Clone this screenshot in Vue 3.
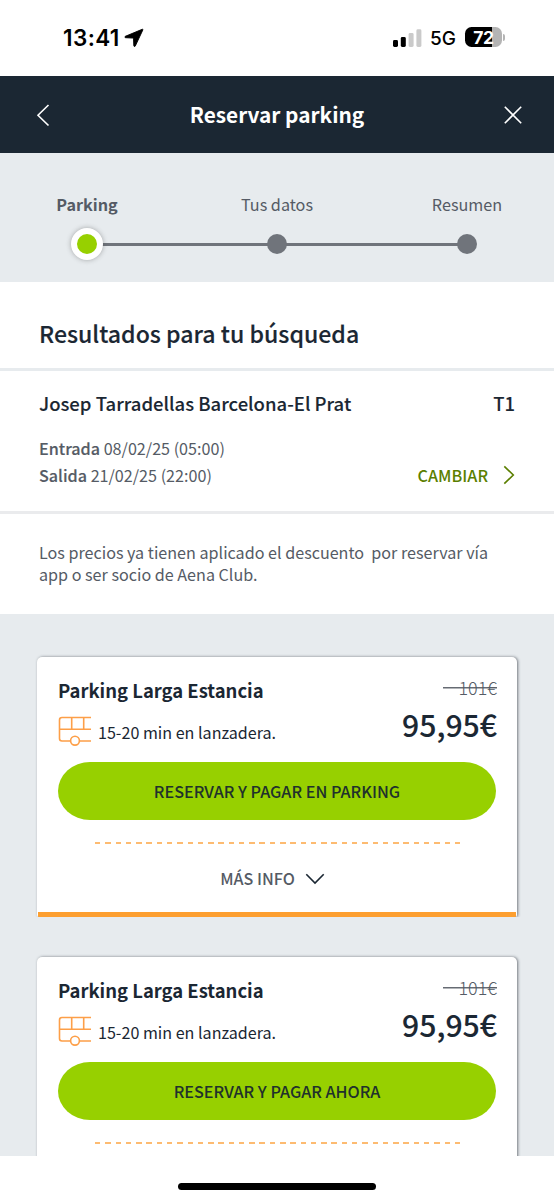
<script setup>
const steps = [
  { label: 'Parking', active: true },
  { label: 'Tus datos', active: false },
  { label: 'Resumen', active: false },
]
const offers = [
  { name: 'Parking Larga Estancia', shuttle: '15-20 min en lanzadera.', before: '101€', price: '95,95€', action: 'RESERVAR Y PAGAR EN PARKING', kind: 'later', more: 'MÁS INFO' },
  { name: 'Parking Larga Estancia', shuttle: '15-20 min en lanzadera.', before: '101€', price: '95,95€', action: 'RESERVAR Y PAGAR AHORA', kind: 'now' },
]
</script>

<template>
  <div class="screen">
    <div class="status">
      <span class="clock">13:41</span>
      <svg class="location" width="20" height="20" viewBox="0 0 20 20"><path d="M18.2 1.3 1.4 8.3c-.8.4-.7 1.3.2 1.4l7.9.4.3 7.6c0 .9 1.2 1.1 1.5.3L18.8 2c.3-.6-.1-.9-.6-.7Z" /></svg>
      <svg class="signal" width="30" height="20" viewBox="0 0 30 20">
        <rect x="1" y="12" width="5" height="7" rx="1.4" />
        <rect x="8.8" y="9" width="5" height="10" rx="1.4" />
        <rect x="16.6" y="5" width="5" height="14" rx="1.4" fill="#cacaca" />
        <rect x="24.4" y="1.3" width="5" height="17.7" rx="1.4" fill="#cacaca" />
      </svg>
      <span class="network">5G</span>
      <span class="battery"><span class="level">72</span></span>
      <span class="tip"></span>
    </div>

    <header class="bar">
      <svg width="14" height="24" viewBox="0 0 14 24"><path d="M12.5 2 2 12.2 12.5 22.5" /></svg>
      <h1>Reservar parking</h1>
      <svg width="20" height="20" viewBox="0 0 20 20"><path d="m1.8 1.8 16.4 16.4M18.2 1.8 1.8 18.2" /></svg>
    </header>

    <nav class="steps">
      <div v-for="step in steps" :key="step.label" class="step" :class="{ active: step.active }">
        <span class="label">{{ step.label }}</span>
        <span class="track"><i class="dot"></i></span>
      </div>
    </nav>

    <section class="heading"><h2>Resultados para tu búsqueda</h2></section>

    <section class="booking">
      <div class="airport"><span class="place">Josep Tarradellas Barcelona-El Prat</span><span class="terminal">T1</span></div>
      <div class="dates">
        <div>
          <p class="entry"><b>Entrada</b> 08/02/25 (05:00)</p>
          <p class="exit"><b>Salida</b> 21/02/25 (22:00)</p>
        </div>
        <a class="change"><span>CAMBIAR</span><svg width="12" height="20" viewBox="0 0 12 20"><path d="m1.3 1.3 9 8.7-9 8.7" /></svg></a>
      </div>
    </section>

    <section class="note">
      <p>Los precios ya tienen aplicado el descuento&nbsp; por reservar vía</p>
      <p class="second">app o ser socio de Aena Club.</p>
    </section>

    <main class="offers">
      <article v-for="offer in offers" :key="offer.kind" class="card">
        <div class="summary">
          <div class="info">
            <h3>{{ offer.name }}</h3>
            <div class="shuttle">
              <svg width="34" height="30" viewBox="0 0 34 30"><path d="M33 1.5H4Q1.5 1.5 1.5 4V22.5Q1.5 25 4 25H12.5M21.5 25H33M1.5 13.2H33M13.7 1.5V13.2M25.7 1.5V13.2" /><circle cx="17" cy="24.7" r="4.4" /></svg>
              <span>{{ offer.shuttle }}</span>
            </div>
          </div>
          <div class="prices">
            <span class="before">{{ offer.before }}</span>
            <span class="price">{{ offer.price }}</span>
          </div>
        </div>
        <button :class="offer.kind"><span>{{ offer.action }}</span></button>
        <div class="dashes"></div>
        <div v-if="offer.more" class="more"><span>{{ offer.more }}</span><svg width="20" height="12" viewBox="0 0 20 12"><path d="m1.3 1.3 8.7 8.7 8.7-8.7" /></svg></div>
      </article>
    </main>

    <footer class="home"><span></span></footer>
  </div>
</template>

<style>
body { margin: 0; background: #fff; }
</style>

<style scoped>
* { box-sizing: border-box; }
h1, h2, h3, p { margin: 0; }
.screen { width: 554px; height: 1200px; overflow: hidden; display: flex; flex-direction: column; background: #fff; color: #1b2733; font-family: "Noto Sans CJK SC", "Noto Sans", sans-serif; white-space: nowrap; }
svg { display: block; flex: none; }
path, circle { fill: none; stroke: currentColor; stroke-width: 1.6; }

.status { height: 76px; flex: none; display: flex; align-items: center; padding: 0 0 2px 63px; color: #000; font-family: Inter, sans-serif; }
.clock { width: 61px; font-size: 22.5px; font-weight: 600; line-height: 30px; letter-spacing: .4px; padding-top: 2px; }
.location path { fill: #000; stroke: #000; stroke-width: .9; stroke-linejoin: round; }
.location { margin-top: 2px; }
.signal { margin-left: 248px; margin-top: 2px; }
.network { width: 34px; margin-left: 8px; padding-top: 3px; font-size: 19px; font-weight: 500; letter-spacing: -.1px; }
.battery { width: 37px; height: 20px; margin-left: 1px; border-radius: 6.5px; background: linear-gradient(90deg, #000 72%, #b4b4b4 72%); color: #fff; font-size: 17.5px; font-weight: 700; line-height: 21px; text-align: center; letter-spacing: -.3px; }
.tip { width: 2px; height: 7px; margin-left: 1px; border-radius: 0 3px 3px 0; background: #b4b4b4; }

.bar { height: 77px; flex: none; display: flex; align-items: center; justify-content: space-between; padding: 0 31px 0 36px; background: #1b2733; color: #fff; }
.bar svg:first-child { margin-right: 1px; }
.bar h1 { font-size: 20.8px; line-height: 30px; font-weight: 700; margin-top: -1px; }

.steps { height: 129px; flex: none; display: grid; grid-template-columns: repeat(3, 190px); justify-content: center; padding-top: 36px; background: #e7ebee; color: #555b65; }
.step { display: flex; flex-direction: column; align-items: center; }
.label { font-size: 16.2px; line-height: 30px; }
.active .label { font-weight: 700; }
.track { width: 100%; height: 50px; display: flex; align-items: center; justify-content: center; background: linear-gradient(#70747b, #70747b) center / 100% 3px no-repeat; }
.step:first-child .track { background-size: 50% 3px; background-position: right center; }
.step:last-child .track { background-size: 50% 3px; background-position: left center; }
.dot { width: 20px; height: 20px; border-radius: 50%; background: #70747b; }
.active .dot { width: 32px; height: 32px; border: 6px solid #fff; background: #97d000; box-shadow: 0 0 5px rgba(60, 60, 60, .4); }

.heading { height: 89px; flex: none; padding: 31px 39px 0; border-bottom: 3px solid #e7ebee; }
.heading h2 { font-size: 23.1px; line-height: 40px; font-weight: 500; -webkit-text-stroke: .15px; }
.booking { height: 143px; flex: none; padding: 17px 39px 0; border-bottom: 3px solid #eaebed; }
.airport { display: flex; justify-content: space-between; font-size: 18.5px; font-weight: 500; line-height: 30px; -webkit-text-stroke: .1px; }
.dates { display: flex; justify-content: space-between; padding-top: 17px; color: #555b65; font-size: 16.15px; line-height: 27px; }
.dates b { font-weight: 500; -webkit-text-stroke: .15px; }
.change { display: flex; align-items: center; gap: 15px; height: 28px; margin-top: 26px; color: #5b7f00; font-weight: 500; font-size: 16.2px; }
.note { height: 100px; flex: none; padding: 27px 39px 0; color: #555b65; font-size: 16.14px; line-height: 22px; }

.offers { height: 542px; flex: none; overflow: hidden; padding: 43px 37px 0; background: #e7ebee; display: flex; flex-direction: column; gap: 40px; }
.card { width: 480px; height: 260px; flex: none; padding: 18px 20px 0 21px; border-radius: 5px 5px 2px 2px; background: linear-gradient(#fd9f30, #fd9f30) 1px bottom / calc(100% - 2px) 5px no-repeat #fff; box-shadow: 1px 0 3px rgba(40, 45, 55, .6); clip-path: inset(-6px -6px 0 -6px); }
.summary { height: 87px; display: flex; justify-content: space-between; }
.info h3 { font-size: 18.45px; line-height: 30px; font-weight: 700; }
.shuttle { display: flex; gap: 6px; margin-top: 11px; font-size: 16.1px; line-height: 32px; }
.shuttle svg { color: #fd9f48; margin-top: 0; }
.prices { display: flex; flex-direction: column; align-items: flex-end; }
.before { width: 54px; text-align: right; color: #555b65; font-size: 18px; line-height: 24px; font-weight: 200; letter-spacing: 0; background: linear-gradient(#666b73, #666b73) 0 12px / 100% 1.5px no-repeat; }
.price { font-size: 30.2px; line-height: 40px; font-weight: 500; margin-top: 5px; -webkit-text-stroke: .1px; }
button { display: flex; align-items: center; justify-content: center; width: 438px; height: 58px; padding: 0; border: 0; border-radius: 32px / 29px; background: #97d000; color: #20312c; font: 500 16.2px/30px "Noto Sans CJK SC", sans-serif; }
.dashes { width: 367px; height: 2px; margin: 22px 0 0 36.5px; background: repeating-linear-gradient(90deg, #fdbb71 0 5.5px, transparent 5.5px 10.28px); }
.more { display: flex; align-items: center; justify-content: center; gap: 10.5px; height: 30px; margin-top: 19px; padding-right: 9.5px; color: #555b65; font-size: 16.1px; font-weight: 500; }
.more svg { color: #1b2733; margin-top: 2px; }
.home { height: 44px; flex: none; display: flex; justify-content: center; padding-top: 27px; }
.home span { width: 198px; height: 7px; border-radius: 4px; background: #000; }
</style>
